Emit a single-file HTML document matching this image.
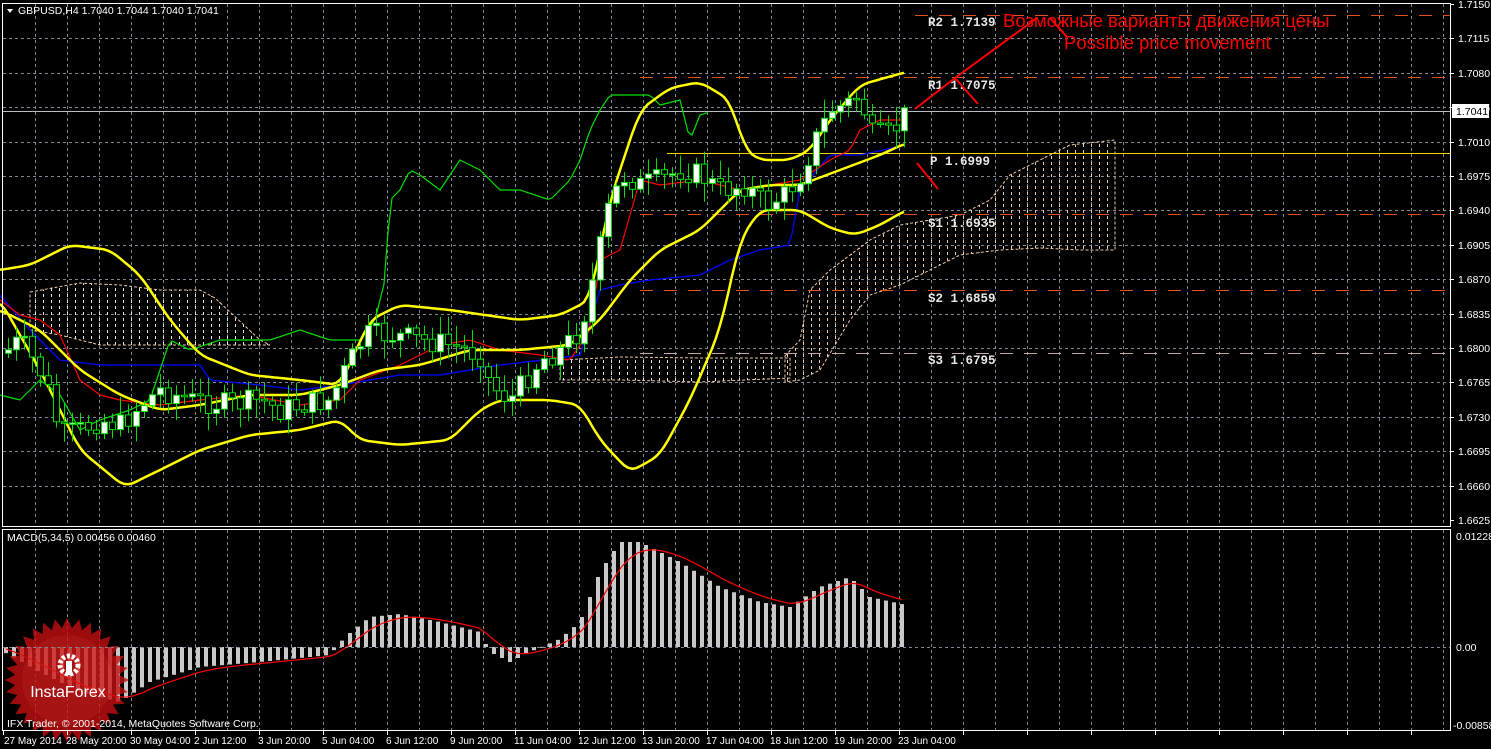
<!DOCTYPE html>
<html><head><meta charset="utf-8"><style>
html,body{margin:0;padding:0;background:#000;width:1491px;height:749px;overflow:hidden}
svg{display:block}
text{font-family:"Liberation Sans",sans-serif}
text.mono{font-family:"Liberation Mono",monospace;font-weight:bold}
</style></head><body>
<svg id="s" width="1491" height="749" xmlns="http://www.w3.org/2000/svg">
<defs>
<pattern id="pw" width="8" height="6" patternUnits="userSpaceOnUse"><line x1="3.5" y1="0" x2="3.5" y2="3" stroke="#e8e8e8" stroke-width="1"/></pattern>
<pattern id="po" width="8" height="6" patternUnits="userSpaceOnUse"><line x1="3.5" y1="0" x2="3.5" y2="3" stroke="#f0c8a8" stroke-width="1"/></pattern>
</defs>
<rect width="1491" height="749" fill="#000"/>
<g id="grid" stroke="#7d8796" stroke-width="1" stroke-dasharray="3,3"></g>
<g id="cloud"></g>
<g stroke="#e0501c" stroke-width="1" stroke-dasharray="13,11">
<line x1="915" y1="15.5" x2="1450" y2="15.5"/><line x1="640" y1="77.5" x2="1450" y2="77.5"/>
<line x1="640" y1="214.5" x2="1450" y2="214.5"/><line x1="640" y1="290.5" x2="1450" y2="290.5"/>
</g>
<line x1="640" y1="353.5" x2="1450" y2="353.5" stroke="#c8a8a8" stroke-dasharray="13,11"/>
<line x1="667" y1="153.5" x2="1450" y2="153.5" stroke="#f0d000"/>
<line x1="3" y1="111.5" x2="1450" y2="111.5" stroke="#b8bcc4"/>
<g id="ind"></g>
<g id="cand"></g>
<g id="macd"></g>
<g opacity="0.8">
<polygon id="star" fill="#c41010"/>
<circle cx="67" cy="680" r="45" fill="#d82020" opacity="0.6"/>
</g>
<g fill="#fff">
<circle cx="69" cy="665" r="9" fill="none" stroke="#fff" stroke-width="5" stroke-dasharray="3,2"/>
<rect x="66" y="661" width="6" height="14"/>
</g>
<text x="68" y="697" fill="#fff" font-size="16" text-anchor="middle">InstaForex</text>
<g stroke="#fff" stroke-width="1" fill="none">
<rect x="2.5" y="3.5" width="1448" height="523"/>
<rect x="2.5" y="529.5" width="1448" height="201"/>
</g>
<g id="ticks" stroke="#fff"></g>
<line x1="3" y1="647.5" x2="1450" y2="647.5" stroke="#7d8796" stroke-dasharray="3,3"/>
<polygon points="7,9 13,9 10,13" fill="#fff"/>
<text x="18" y="14" fill="#fff" font-size="10.5">GBPUSD,H4  1.7040 1.7044 1.7040 1.7041</text>
<text x="7" y="541" fill="#fff" font-size="10.5">MACD(5,34,5) 0.00456 0.00460</text>
<text x="7" y="727" fill="#fff" font-size="10.5">IFX Trader, © 2001-2014, MetaQuotes Software Corp.</text>
<g fill="#fff" font-size="10.5" id="pax"></g>
<rect x="1452" y="104" width="37" height="14" fill="#fff"/>
<text x="1456" y="115" fill="#000" font-size="10.5">1.7041</text>
<g fill="#fff" font-size="10.5">
<text x="1456" y="540">0.01228</text><text x="1456" y="651">0.00</text><text x="1453" y="729">-0.00858</text>
</g>
<g fill="#fff" font-size="10">
<text x="4" y="744">27 May 2014</text><text x="66" y="744">28 May 20:00</text><text x="130" y="744">30 May 04:00</text>
<text x="194" y="744">2 Jun 12:00</text><text x="258" y="744">3 Jun 20:00</text><text x="322" y="744">5 Jun 04:00</text>
<text x="386" y="744">6 Jun 12:00</text><text x="450" y="744">9 Jun 20:00</text><text x="514" y="744">11 Jun 04:00</text>
<text x="578" y="744">12 Jun 12:00</text><text x="642" y="744">13 Jun 20:00</text><text x="706" y="744">17 Jun 04:00</text>
<text x="770" y="744">18 Jun 12:00</text><text x="834" y="744">19 Jun 20:00</text><text x="898" y="744">23 Jun 04:00</text>
</g>
<g fill="#e8e8e8" font-size="12.5">
<text class="mono" x="928" y="26">R2 1.7139</text><text class="mono" x="928" y="89">R1 1.7075</text><text class="mono" x="930" y="165">P 1.6999</text>
<text class="mono" x="928" y="227">S1 1.6935</text><text class="mono" x="928" y="302">S2 1.6859</text><text class="mono" x="928" y="364">S3 1.6795</text>
</g>
<g stroke="#f00" stroke-width="2" fill="none">
<polyline points="915,109 955,78 1037,18"/><line x1="955" y1="78" x2="978" y2="104"/>
<line x1="1050" y1="18" x2="1067" y2="37"/>
<line x1="917" y1="163" x2="938" y2="189"/>
</g>
<text x="1003" y="27" fill="#f00" font-size="18.5">Возможные варианты движения цены</text>
<text x="1064" y="49" fill="#f00" font-size="18.5">Possible price movement</text>
</svg>
<script>
(function(){
var NS="http://www.w3.org/2000/svg";
function el(p,t,a){var e=document.createElementNS(NS,t);for(var k in a)e.setAttribute(k,a[k]);document.getElementById(p).appendChild(e);return e;}
for(var x=35;x<1450;x+=32){el('grid','line',{x1:x+.5,y1:4,x2:x+.5,y2:526});el('grid','line',{x1:x+.5,y1:530,x2:x+.5,y2:730});}
var labs=["1.7150","1.7115","1.7080","1.7045","1.7010","1.6975","1.6940","1.6905","1.6870","1.6835","1.6800","1.6765","1.6730","1.6695","1.6660","1.6625"];
for(var i=0;i<16;i++){var y=Math.round(4+i*34.4);if(i>0&&i<15)el('grid','line',{x1:3,y1:y+.5,x2:1450,y2:y+.5});
 var t=el('pax','text',{x:1458,y:y+4});t.textContent=labs[i];el('ticks','line',{x1:1450,y1:y+.5,x2:1454,y2:y+.5});}
for(var x=3;x<1450;x+=64)el('ticks','line',{x1:x+.5,y1:731,x2:x+.5,y2:735});
function interp(P,x){for(var i=0;i<P.length-1;i++){if(x<=P[i+1][0]){var t=(x-P[i][0])/(P[i+1][0]-P[i][0]);return P[i][1]+t*(P[i+1][1]-P[i][1]);}}return P[P.length-1][1];}
function smooth(P,x){var s=0,n=0;for(var d=-8;d<=8;d+=2){var xx=Math.min(Math.max(x+d,P[0][0]),P[P.length-1][0]);s+=interp(P,xx);n++;}return s/n;}
function pl(P,c,w){var s="";for(var x=P[0][0];x<=P[P.length-1][0];x+=4)s+=x+","+smooth(P,x).toFixed(1)+" ";
 el('ind','polyline',{points:s,fill:"none",stroke:c,"stroke-width":w});}
function plr(P,c,w){var s="";for(var x=P[0][0];x<=P[P.length-1][0];x+=4)s+=x+","+interp(P,x).toFixed(1)+" ";
 el('ind','polyline',{points:s,fill:"none",stroke:c,"stroke-width":w});}
function poly(g,pts,fill,stroke){el(g,'polygon',{points:pts,fill:fill,stroke:stroke,"stroke-dasharray":"3,2"});}
poly('cloud',"30,292 80,283 120,285 160,290 200,290 215,298 230,312 260,340 270,345 220,345 100,345 60,335 30,330","url(#pw)","#f0c8a8");
poly('cloud',"560,360 620,357 700,358 790,358 790,378 700,382 620,380 560,380","url(#pw)","#f0c8a8");
poly('cloud',"785,356 800,340 810,290 830,270 870,240 900,225 930,220 960,215 990,200 1010,175 1040,160 1070,145 1115,140 1115,250 1080,250 1040,248 1000,250 960,255 930,270 900,285 870,295 850,320 820,370 800,380 785,382","url(#po)","#f0c8a8");
plr([[0,295],[30,330],[60,360],[100,365],[140,365],[200,365],[210,380],[260,385],[300,390],[340,385],[400,375],[440,375],[500,365],[560,358],[580,355],[600,290],[620,285],[650,280],[700,275],[730,260],[760,250],[790,245],[800,190],[830,155],[860,155],[906,145]],"#0000ff",1.3);
plr([[0,300],[20,315],[40,320],[60,335],[80,380],[100,395],[120,400],[160,405],[200,400],[250,395],[300,405],[340,400],[360,380],[400,365],[440,345],[470,340],[500,350],[540,355],[570,360],[590,330],[600,260],[620,250],[640,180],[660,185],[700,180],[740,190],[770,185],[800,180],[830,160],[850,150],[860,130],[880,120],[906,120]],"#ff0000",1.2);
plr([[0,395],[20,400],[40,380],[60,395],[80,430],[100,420],[130,410],[150,400],[170,340],[190,350],[220,340],[270,340],[300,330],[330,340],[360,340],[375,320],[385,280],[390,200],[400,190],[410,170],[420,175],[440,190],[460,160],[480,170],[500,190],[520,190],[550,200],[570,180],[580,160],[590,130],[600,110],[610,95],[625,95],[650,95],[660,105],[680,100],[690,140],[700,115],[710,112]],"#00e000",1.2);
pl([[0,270],[30,265],[70,245],[110,250],[140,275],[170,320],[200,355],[250,375],[300,380],[340,385],[370,320],[400,305],[450,310],[520,320],[560,315],[590,300],[610,200],[640,110],[670,88],[700,82],[730,100],[745,150],[760,160],[790,160],[810,150],[830,120],[860,85],[906,72]],"#ffff00",2.5);
pl([[0,310],[40,330],[80,370],[120,395],[160,410],[200,405],[250,395],[300,395],[340,385],[380,370],[420,365],[470,350],[520,350],[570,345],[600,320],[630,280],[660,250],[700,230],[740,190],[770,185],[800,185],[840,170],[880,155],[906,143]],"#ffff00",2.5);
pl([[0,300],[40,370],[80,450],[125,487],[160,470],[200,450],[250,435],[300,430],[340,420],[360,440],[400,445],[450,440],[480,410],[500,400],[550,400],[580,405],[600,440],[630,472],[660,455],[690,400],[720,330],[740,240],[760,210],[800,210],[830,228],[855,235],[880,225],[906,210]],"#ffff00",2.5);
var CP=[[8,350],[20,340],[45,380],[60,435],[80,430],[100,420],[120,425],[140,405],[160,390],[190,400],[230,405],[260,400],[280,410],[300,405],[330,400],[345,370],[365,335],[390,335],[420,340],[450,345],[480,355],[490,385],[510,400],[540,360],[560,350],[580,330],[595,270],[610,200],[625,175],[640,185],[660,180],[680,170],[700,175],[720,190],[745,185],[765,205],[785,195],[800,175],[815,140],[830,110],[845,105],[860,95],[870,135],[890,135],[906,113]];
var seed=7;function rnd(){seed=(seed*9301+49297)%233280;return seed/233280;}
var prev=interp(CP,4);
for(var x=8;x<=906;x+=8){var c=interp(CP,x)+(rnd()-.5)*24;var o=prev;var bt=Math.min(o,c),bb=Math.max(o,c);
 var hi=bt-rnd()*16-3,lo=bb+rnd()*16+3;el('cand','line',{x1:x+.5,y1:hi,x2:x+.5,y2:lo,stroke:"#00e000"});
 el('cand','rect',{x:x-2.5,y:bt,width:6,height:Math.max(1.5,bb-bt),fill:(c<o?"#fff":"#000"),stroke:"#00e000","stroke-width":1});prev=c;}
var MP=[[4,-5],[40,-25],[80,-45],[120,-55],[150,-35],[200,-20],[260,-15],[330,-8],[345,10],[370,30],[400,33],[440,25],[480,15],[490,-5],[510,-15],[530,-5],[560,8],[580,25],[600,75],[620,105],[640,105],[680,85],[720,60],[760,45],[790,40],[820,60],[850,70],[870,50],[906,42]];
var sig=0,sp="";
for(var x=6;x<=906;x+=8){var v=interp(MP,x);var y1=647-v;el('macd','rect',{x:x-2,y:Math.min(647,y1),width:4,height:Math.max(1,Math.abs(v)),fill:"#c8c8c8"});
 sig=sig+(v-sig)*0.33;sp+=x+","+(647-sig).toFixed(1)+" ";}
el('macd','polyline',{points:sp,fill:"none",stroke:"#ff0000","stroke-width":1.2});
var s="";for(var i=0;i<64;i++){var a=i*Math.PI/32,r=i%2?52:62;s+=(67+r*Math.cos(a)).toFixed(1)+","+(680+r*Math.sin(a)).toFixed(1)+" ";}
document.getElementById('star').setAttribute('points',s);
})();
</script>
</body></html>
